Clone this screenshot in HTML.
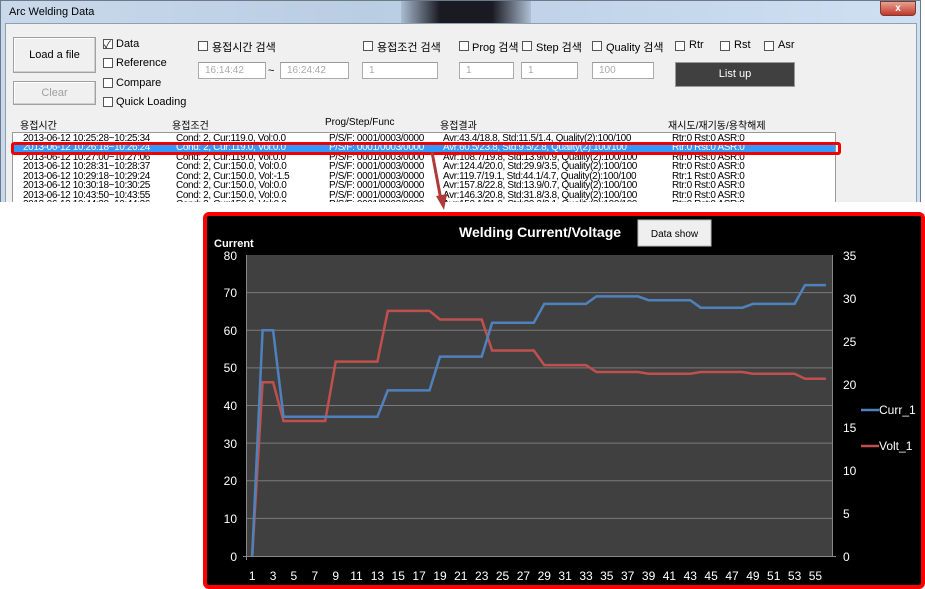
<!DOCTYPE html>
<html><head><meta charset="utf-8"><style>
*{margin:0;padding:0;box-sizing:border-box}
body{width:925px;height:589px;background:#fff;position:relative;overflow:hidden;font-family:"Liberation Sans","Noto Sans CJK KR",sans-serif;font-size:11px;color:#000}
.a{position:absolute;white-space:nowrap}
.win{position:absolute;left:0;top:0;width:921px;height:202px;background:linear-gradient(90deg,#c9d9ea,#b9cde3 40%,#cfe0f2);border:1px solid #6b7b8c;border-bottom:none}
.client{position:absolute;left:5px;top:23px;width:912px;height:179px;background:#f0f0f0;border:1px solid #8ea0b3;border-bottom:none}
.btn{position:absolute;background:#f0f0f0;border:1px solid #a0a0a0;box-shadow:inset -1px -1px 0 #d0d0d0,inset 1px 1px 0 #fff;text-align:center}
.cb{position:absolute;width:10px;height:10px;border:1px solid #555;background:#fff}
.inp{position:absolute;height:17px;background:#fff;border:1px solid #aaa;border-top-color:#999;color:#aaa;font-size:10px;padding:1px 6px;line-height:14px}
.row{position:absolute;left:0;height:10px;font-size:10px;line-height:10px;letter-spacing:-0.38px;color:#000}
.row span{position:absolute;top:0}
</style></head><body>
<div class="win">
<div class="a" style="left:8px;top:5px;font-size:11px">Arc Welding Data</div>
<div class="a" style="left:400px;top:0;width:130px;height:22px;background:linear-gradient(90deg,rgba(30,30,40,0.1),#1a1a22 30%,#1a1a22 70%,rgba(30,30,40,0.1))"></div>
<div class="a" style="left:879px;top:0;width:36px;height:15px;background:linear-gradient(#e8a090,#c0392b);border:1px solid #7a3a30;border-radius:0 0 4px 4px;color:#fff;text-align:center;font-weight:bold;font-size:10px;line-height:13px">x</div>
</div>
<div class="client"></div>
<div class="btn" style="left:13px;top:37px;width:83px;height:36px;line-height:34px">Load a file</div>
<div class="btn" style="left:13px;top:81px;width:83px;height:24px;line-height:22px;color:#a0a0a0">Clear</div>
<div class="cb" style="left:103px;top:39px"></div><div class="a" style="left:104px;top:36px;font-size:10px">✓</div><div class="a" style="left:116px;top:38px">Data</div>
<div class="cb" style="left:103px;top:58px"></div><div class="a" style="left:116px;top:57px">Reference</div>
<div class="cb" style="left:103px;top:78px"></div><div class="a" style="left:116px;top:77px">Compare</div>
<div class="cb" style="left:103px;top:97px"></div><div class="a" style="left:116px;top:96px">Quick Loading</div>

<div class="cb" style="left:198px;top:41px"></div><div class="a" style="left:212px;top:39px">용접시간 검색</div>
<div class="cb" style="left:363px;top:41px"></div><div class="a" style="left:377px;top:39px">용접조건 검색</div>
<div class="cb" style="left:459px;top:41px"></div><div class="a" style="left:472px;top:39px">Prog 검색</div>
<div class="cb" style="left:522px;top:41px"></div><div class="a" style="left:536px;top:39px">Step 검색</div>
<div class="cb" style="left:592px;top:41px"></div><div class="a" style="left:606px;top:39px">Quality 검색</div>
<div class="cb" style="left:675px;top:41px"></div><div class="a" style="left:689px;top:39px">Rtr</div>
<div class="cb" style="left:720px;top:41px"></div><div class="a" style="left:734px;top:39px">Rst</div>
<div class="cb" style="left:764px;top:41px"></div><div class="a" style="left:778px;top:39px">Asr</div>

<div class="inp" style="left:198px;top:62px;width:68px">16:14:42</div>
<div class="a" style="left:268px;top:65px">~</div>
<div class="inp" style="left:280px;top:62px;width:69px">16:24:42</div>
<div class="inp" style="left:362px;top:62px;width:76px">1</div>
<div class="inp" style="left:459px;top:62px;width:55px">1</div>
<div class="inp" style="left:521px;top:62px;width:57px">1</div>
<div class="inp" style="left:592px;top:62px;width:62px">100</div>
<div class="a" style="left:675px;top:62px;width:120px;height:25px;background:#404040;border:1px solid #999;color:#fff;text-align:center;line-height:23px">List up</div>

<div class="a" style="left:20px;top:117px;font-size:10px">용접시간</div>
<div class="a" style="left:172px;top:117px;font-size:10px">용접조건</div>
<div class="a" style="left:325px;top:117px;font-size:10px">Prog/Step/Func</div>
<div class="a" style="left:440px;top:117px;font-size:10px">용접결과</div>
<div class="a" style="left:668px;top:117px;font-size:10px">재시도/재기동/용착해제</div>

<div class="a" style="left:12px;top:132px;width:824px;height:70px;background:#fff;border:1px solid #999;border-bottom:none;overflow:hidden">
<div class="a" style="left:0;top:11px;width:822px;height:9px;background:#3399ff"></div>
<div class="row" style="top:1px"><span style="left:10px">2013-06-12 10:25:28~10:25:34</span><span style="left:163px">Cond: 2, Cur:119.0, Vol:0.0</span><span style="left:316px">P/S/F: 0001/0003/0000</span><span style="left:430px">Avr:43.4/18.8, Std:11.5/1.4, Quality(2):100/100</span><span style="left:659px">Rtr:0 Rst:0 ASR:0</span></div>
<div class="row" style="top:10px;color:#fff"><span style="left:10px">2013-06-12 10:26:18~10:26:24</span><span style="left:163px">Cond: 2, Cur:119.0, Vol:0.0</span><span style="left:316px">P/S/F: 0001/0003/0000</span><span style="left:430px">Avr:60.5/23.8, Std:9.5/2.8, Quality(2):100/100</span><span style="left:659px">Rtr:0 Rst:0 ASR:0</span></div>
<div class="row" style="top:19.5px"><span style="left:10px">2013-06-12 10:27:00~10:27:06</span><span style="left:163px">Cond: 2, Cur:119.0, Vol:0.0</span><span style="left:316px">P/S/F: 0001/0003/0000</span><span style="left:430px">Avr:108.7/19.8, Std:13.9/0.9, Quality(2):100/100</span><span style="left:659px">Rtr:0 Rst:0 ASR:0</span></div>
<div class="row" style="top:29px"><span style="left:10px">2013-06-12 10:28:31~10:28:37</span><span style="left:163px">Cond: 2, Cur:150.0, Vol:0.0</span><span style="left:316px">P/S/F: 0001/0003/0000</span><span style="left:430px">Avr:124.4/20.0, Std:29.9/3.5, Quality(2):100/100</span><span style="left:659px">Rtr:0 Rst:0 ASR:0</span></div>
<div class="row" style="top:38.5px"><span style="left:10px">2013-06-12 10:29:18~10:29:24</span><span style="left:163px">Cond: 2, Cur:150.0, Vol:-1.5</span><span style="left:316px">P/S/F: 0001/0003/0000</span><span style="left:430px">Avr:119.7/19.1, Std:44.1/4.7, Quality(2):100/100</span><span style="left:659px">Rtr:1 Rst:0 ASR:0</span></div>
<div class="row" style="top:48px"><span style="left:10px">2013-06-12 10:30:18~10:30:25</span><span style="left:163px">Cond: 2, Cur:150.0, Vol:0.0</span><span style="left:316px">P/S/F: 0001/0003/0000</span><span style="left:430px">Avr:157.8/22.8, Std:13.9/0.7, Quality(2):100/100</span><span style="left:659px">Rtr:0 Rst:0 ASR:0</span></div>
<div class="row" style="top:57.5px"><span style="left:10px">2013-06-12 10:43:50~10:43:55</span><span style="left:163px">Cond: 2, Cur:150.0, Vol:0.0</span><span style="left:316px">P/S/F: 0001/0003/0000</span><span style="left:430px">Avr:146.3/20.8, Std:31.8/3.8, Quality(2):100/100</span><span style="left:659px">Rtr:0 Rst:0 ASR:0</span></div>
<div class="row" style="top:67px"><span style="left:10px">2013-06-12 10:44:30~10:44:36</span><span style="left:163px">Cond: 2, Cur:150.0, Vol:0.0</span><span style="left:316px">P/S/F: 0001/0003/0000</span><span style="left:430px">Avr:150.1/21.0, Std:20.2/2.1, Quality(2):100/100</span><span style="left:659px">Rtr:0 Rst:0 ASR:0</span></div>
</div>
<div class="a" style="left:11px;top:142px;width:830px;height:13px;border:3px solid #e00;border-radius:3px"></div>

<div class="a" style="left:203px;top:212px;width:722px;height:377px;background:#000;border:4px solid #f00;border-radius:6px"></div>
<svg class="a" style="left:0;top:0" width="925" height="589">
<line x1="432" y1="152" x2="441" y2="200" stroke="#b03a3a" stroke-width="3"/>
<polygon points="436,196 447,194 444,210" fill="#b03a3a"/>
<rect x="247" y="255" width="585" height="301" fill="#404040"/>
<g stroke="#7a7a7a" stroke-width="1">
<line x1="247" x2="832" y1="292.6" y2="292.6"/><line x1="247" x2="832" y1="330.3" y2="330.3"/><line x1="247" x2="832" y1="367.9" y2="367.9"/><line x1="247" x2="832" y1="405.5" y2="405.5"/><line x1="247" x2="832" y1="443.1" y2="443.1"/><line x1="247" x2="832" y1="480.8" y2="480.8"/><line x1="247" x2="832" y1="518.4" y2="518.4"/>
</g>
<g stroke="#888" stroke-width="1"><line x1="246.5" x2="246.5" y1="255" y2="560"/><line x1="832.5" x2="832.5" y1="255" y2="556"/><line x1="243" x2="836" y1="556.5" y2="556.5"/></g>
<polyline fill="none" stroke="#c0504d" stroke-width="2.5" points="252.2,556 262.6,382.3 273.1,382.3 283.5,421 325.2,421 335.7,361.6 377.4,361.6 387.8,310.9 429.5,310.9 440,319.5 481.7,319.5 492.1,350.5 533.8,350.5 544.3,365.1 586,365.1 596.4,372 638.1,372 648.6,373.7 690.3,373.7 700.7,372 742.4,372 752.9,373.7 794.6,373.7 805,378.8 825.9,378.8"/>
<polyline fill="none" stroke="#4f81bd" stroke-width="2.5" points="252.2,556 262.6,330.3 273.1,330.3 283.5,416.8 377.4,416.8 387.8,390.4 429.5,390.4 440,356.6 481.7,356.6 492.1,322.7 533.8,322.7 544.3,303.9 586,303.9 596.4,296.4 638.1,296.4 648.6,300.2 690.3,300.2 700.7,307.7 742.4,307.7 752.9,303.9 794.6,303.9 805,285.1 825.9,285.1"/>
<line x1="861" x2="879" y1="410" y2="410" stroke="#4f81bd" stroke-width="2.5"/>
<line x1="861" x2="879" y1="446" y2="446" stroke="#c0504d" stroke-width="2.5"/>
<g fill="#fff" font-family="Liberation Sans,sans-serif" font-size="12">
<text x="879" y="414">Curr_1</text><text x="879" y="450">Volt_1</text>
<g text-anchor="end"><text x="237" y="260">80</text><text x="237" y="297">70</text><text x="237" y="335">60</text><text x="237" y="372">50</text><text x="237" y="410">40</text><text x="237" y="448">30</text><text x="237" y="485">20</text><text x="237" y="523">10</text><text x="237" y="561">0</text></g>
<text x="843" y="260">35</text><text x="843" y="303">30</text><text x="843" y="346">25</text><text x="843" y="389">20</text><text x="843" y="432">15</text><text x="843" y="475">10</text><text x="843" y="518">5</text><text x="843" y="561">0</text>
<g text-anchor="middle">
<text x="252.2" y="580">1</text><text x="273.1" y="580">3</text><text x="293.9" y="580">5</text><text x="314.8" y="580">7</text><text x="335.7" y="580">9</text><text x="356.5" y="580">11</text><text x="377.4" y="580">13</text><text x="398.2" y="580">15</text><text x="419.1" y="580">17</text><text x="440" y="580">19</text><text x="460.8" y="580">21</text><text x="481.7" y="580">23</text><text x="502.5" y="580">25</text><text x="523.4" y="580">27</text><text x="544.3" y="580">29</text><text x="565.1" y="580">31</text><text x="586" y="580">33</text><text x="606.8" y="580">35</text><text x="627.7" y="580">37</text><text x="648.6" y="580">39</text><text x="669.4" y="580">41</text><text x="690.3" y="580">43</text><text x="711.1" y="580">45</text><text x="732" y="580">47</text><text x="752.9" y="580">49</text><text x="773.7" y="580">51</text><text x="794.6" y="580">53</text><text x="815.4" y="580">55</text>
</g>
<text x="459" y="237" font-size="14" font-weight="bold">Welding Current/Voltage</text>
<text x="214" y="247" font-size="11" font-weight="bold">Current</text>
</g>
<rect x="638" y="220" width="73" height="26" fill="#efefef" stroke="#bbb"/>
<text x="674.5" y="237" fill="#000" font-family="Liberation Sans,sans-serif" font-size="10" text-anchor="middle">Data show</text>
</svg>
</body></html>
